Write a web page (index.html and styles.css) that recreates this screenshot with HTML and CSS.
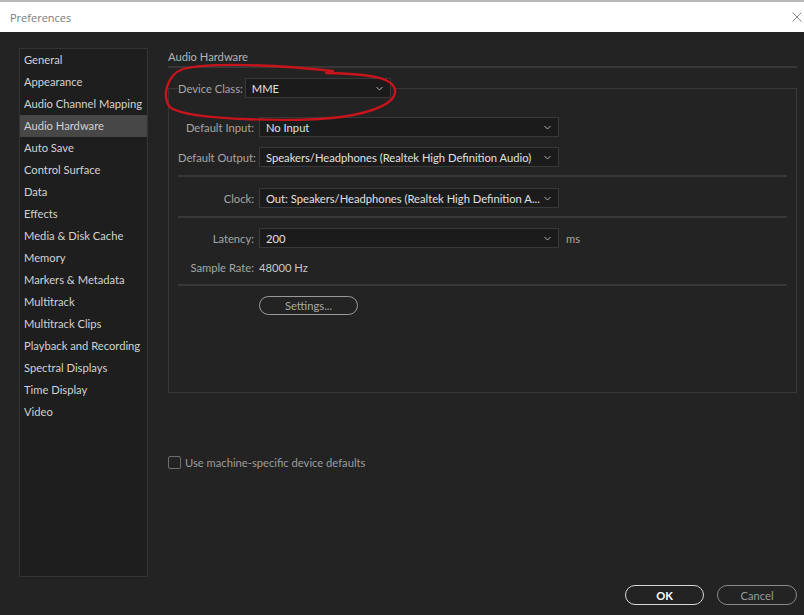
FILE: index.html
```html
<!DOCTYPE html>
<html>
<head>
<meta charset="utf-8">
<link rel="stylesheet" href="styles.css">
</head>
<body>
<div class="window">
  <div class="titlebar">
    <span class="title">Preferences</span>
    <svg class="close" width="10" height="10" viewBox="0 0 10 10"><path d="M0.5 0.5 L9.5 9.5 M9.5 0.5 L0.5 9.5" stroke="#8a8a8a" stroke-width="1" fill="none"/></svg>
  </div>
  <div class="content">
    <ul class="sidebar">
      <li>General</li>
      <li>Appearance</li>
      <li>Audio Channel Mapping</li>
      <li class="selected">Audio Hardware</li>
      <li>Auto Save</li>
      <li>Control Surface</li>
      <li>Data</li>
      <li>Effects</li>
      <li>Media &amp; Disk Cache</li>
      <li>Memory</li>
      <li>Markers &amp; Metadata</li>
      <li>Multitrack</li>
      <li>Multitrack Clips</li>
      <li>Playback and Recording</li>
      <li>Spectral Displays</li>
      <li>Time Display</li>
      <li>Video</li>
    </ul>
    <div class="main">
      <div class="section-title">Audio Hardware</div>
      <fieldset class="group">
        <legend class="legend">
          <span class="label">Device Class:</span>
          <span class="select select-device"><span>MME</span><svg class="chev" width="7" height="5" viewBox="0 0 7 5"><path d="M0.5 1 L3.5 4 L6.5 1" stroke="#b0b0b0" stroke-width="1" fill="none"/></svg></span>
        </legend>
        <div class="row">
          <span class="label lab-col">Default Input:</span>
          <span class="select"><span>No Input</span><svg class="chev" width="7" height="5" viewBox="0 0 7 5"><path d="M0.5 1 L3.5 4 L6.5 1" stroke="#b0b0b0" stroke-width="1" fill="none"/></svg></span>
        </div>
        <div class="row row-gap">
          <span class="label lab-col">Default Output:</span>
          <span class="select"><span>Speakers/Headphones (Realtek High Definition Audio)</span><svg class="chev" width="7" height="5" viewBox="0 0 7 5"><path d="M0.5 1 L3.5 4 L6.5 1" stroke="#b0b0b0" stroke-width="1" fill="none"/></svg></span>
        </div>
        <div class="sep sep1"></div>
        <div class="row">
          <span class="label lab-col">Clock:</span>
          <span class="select"><span>Out: Speakers/Headphones (Realtek High Definition A...</span><svg class="chev" width="7" height="5" viewBox="0 0 7 5"><path d="M0.5 1 L3.5 4 L6.5 1" stroke="#b0b0b0" stroke-width="1" fill="none"/></svg></span>
        </div>
        <div class="sep sep2"></div>
        <div class="row">
          <span class="label lab-col">Latency:</span>
          <span class="select"><span>200</span><svg class="chev" width="7" height="5" viewBox="0 0 7 5"><path d="M0.5 1 L3.5 4 L6.5 1" stroke="#b0b0b0" stroke-width="1" fill="none"/></svg></span>
          <span class="unit">ms</span>
        </div>
        <div class="row row-rate">
          <span class="label lab-col">Sample Rate:</span>
          <span class="value">48000 Hz</span>
        </div>
        <div class="sep sep3"></div>
        <div class="row">
          <span class="lab-col"></span>
          <span class="pill settings">Settings...</span>
        </div>
      </fieldset>
      <label class="check">
        <span class="box"></span>
        <span>Use machine-specific device defaults</span>
      </label>
    </div>
  </div>
  <div class="footer">
    <span class="pill ok">OK</span>
    <span class="pill cancel">Cancel</span>
  </div>
  <svg class="annotation" width="804" height="615" viewBox="0 0 804 615">
    <path d="M333 71 C280 65 212 62 183 69 C166 75 161 99 171 108 C193 121 300 122 341 117 C376 112 397 102 395 90 C393 78 372 74 326 73" stroke="#c8141c" stroke-width="2.3" fill="none" stroke-linecap="round"/>
  </svg>
</div>
</body>
</html>
```

FILE: styles.css
```css
* { box-sizing: border-box; }
html, body {
  margin: 0;
  padding: 0;
  background: #232323;
  width: 804px;
  height: 615px;
  overflow: hidden;
}
body {
  font-family: Lato, "Open Sans", sans-serif;
  font-size: 11.2px;
  color: #c8c8c8;
}
.window {
  position: relative;
  width: 804px;
  height: 615px;
  display: flex;
  flex-direction: column;
}
.titlebar {
  height: 32px;
  background: #ffffff;
  border-top: 2px solid #b9b9b9;
  display: flex;
  align-items: center;
  justify-content: space-between;
  padding: 0 2px 0 10px;
  flex: none;
}
.title {
  font-family: "Open Sans", sans-serif;
  font-size: 11px;
  color: #7a7a7a;
  margin-top: 1px;
}
.content {
  display: flex;
  padding: 16px 7px 0 19px;
  gap: 20px;
  flex: none;
}
.sidebar {
  list-style: none;
  margin: 0;
  padding: 0;
  width: 129px;
  height: 529px;
  background: #1e1e1e;
  border: 1px solid #343434;
  flex: none;
}
.sidebar li {
  height: 22px;
  line-height: 22px;
  padding-left: 4px;
  color: #d2d2d2;
  white-space: nowrap;
}
.sidebar li.selected {
  background: #474747;
}
.main {
  flex: 1;
  display: flex;
  flex-direction: column;
}
.section-title {
  height: 20px;
  line-height: 18px;
  color: #b5b5b5;
  border-bottom: 2px solid #383838;
}
.group {
  margin: 10px 0 0 0;
  padding: 19px 9px 77px 9px;
  border: 1px solid #383838;
  min-width: 0;
}
.legend {
  padding: 0 4px 0 0;
  display: flex;
  align-items: center;
  gap: 2px;
  height: 20px;
}
.label {
  color: #a6a6a6;
  white-space: nowrap;
}
.lab-col {
  width: 76px;
  text-align: right;
  flex: none;
}
.row {
  display: flex;
  align-items: center;
  gap: 5px;
  height: 20px;
}
.row-gap { margin-top: 10px; }
.select {
  width: 300px;
  height: 20px;
  background: #1b1b1b;
  border: 1px solid #393939;
  display: flex;
  align-items: center;
  justify-content: space-between;
  padding: 0 7px 0 6px;
  color: #e0e0e0;
  white-space: nowrap;
  flex: none;
}
.select-device { width: 146px; }
.chev { flex: none; }
.unit {
  color: #a6a6a6;
  margin-left: 2px;
}
.value { color: #c8c8c8; }
.sep {
  height: 2px;
  background: #383838;
}
.sep1 { margin: 8px 0 11px; }
.sep2 { margin: 8px 0 10px; }
.row-rate { margin-top: 9px; }
.sep3 { margin: 7px 0 9px; }
.pill {
  display: inline-flex;
  align-items: center;
  justify-content: center;
  height: 20px;
  border-radius: 10px;
  flex: none;
}
.settings {
  width: 99px;
  height: 19px;
  border: 1.5px solid #9a9a9a;
  color: #a8a8a8;
}
.check {
  display: flex;
  align-items: center;
  gap: 4px;
  margin-top: 63px;
  color: #9c9c9c;
}
.box {
  width: 13px;
  height: 13px;
  border: 1.5px solid #6e6e6e;
  border-radius: 2px;
}
.footer {
  display: flex;
  justify-content: flex-end;
  gap: 13px;
  padding: 8px 7px 0 0;
}
.ok {
  width: 79px;
  border: 1.5px solid #d8d8d8;
  color: #ffffff;
  font-weight: bold;
}
.cancel {
  width: 80px;
  border: 1.5px solid #8a8a8a;
  color: #9a9a9a;
}
.annotation {
  position: absolute;
  left: 0;
  top: 0;
  pointer-events: none;
}
```
